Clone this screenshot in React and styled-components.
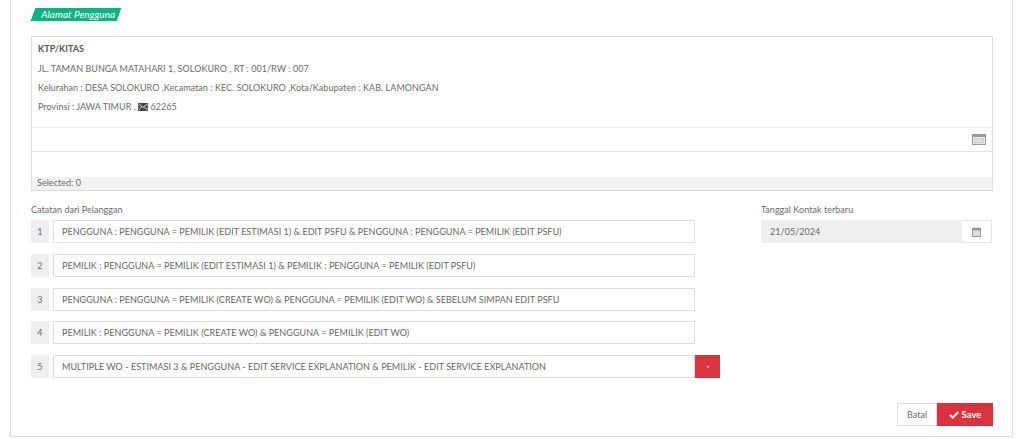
import React from 'react';
import styled, { createGlobalStyle } from 'styled-components';

const notes = [
  'PENGGUNA : PENGGUNA = PEMILIK (EDIT ESTIMASI 1) & EDIT PSFU & PENGGUNA : PENGGUNA = PEMILIK (EDIT PSFU)',
  'PEMILIK : PENGGUNA = PEMILIK (EDIT ESTIMASI 1) & PEMILIK : PENGGUNA = PEMILIK (EDIT PSFU)',
  'PENGGUNA : PENGGUNA = PEMILIK (CREATE WO) & PENGGUNA = PEMILIK (EDIT WO) & SEBELUM SIMPAN EDIT PSFU',
  'PEMILIK : PENGGUNA = PEMILIK (CREATE WO) & PENGGUNA = PEMILIK (EDIT WO)',
  'MULTIPLE WO - ESTIMASI 3 & PENGGUNA - EDIT SERVICE EXPLANATION & PEMILIK - EDIT SERVICE EXPLANATION',
];

const App = () => {
  return (
    <Page>
      <GlobalStyle />
      <Panel>
        <Tag><span>Alamat Pengguna</span></Tag>
        <AddressBox>
          <AddressBody>
            <AddressTitle>KTP/KITAS</AddressTitle>
            <AddressLine>JL. TAMAN BUNGA MATAHARI 1, SOLOKURO , RT : 001/RW : 007</AddressLine>
            <AddressLine>Kelurahan : DESA SOLOKURO ,Kecamatan : KEC. SOLOKURO ,Kota/Kabupaten : KAB. LAMONGAN</AddressLine>
            <AddressLine>
              Provinsi : JAWA TIMUR ,{' '}
              <MailIcon viewBox="0 0 12 10">
                <rect width="12" height="10" fill="#444" />
                <path d="M1 1.5 6 5.5 11 1.5M1 8.5 4.5 4.5M11 8.5 7.5 4.5" stroke="#fff" strokeWidth="1" fill="none" />
              </MailIcon>{' '}
              62265
            </AddressLine>
          </AddressBody>
          <ToolRow>
            <TableIcon viewBox="0 0 14 11">
              <rect x="0.5" y="0.5" width="13" height="10" fill="#eee" stroke="#999" />
              <rect x="1" y="1" width="12" height="2" fill="#999" />
              <rect x="2.5" y="4.5" width="9" height="4.5" fill="#ddd" stroke="#bbb" strokeWidth="0.6" />
            </TableIcon>
          </ToolRow>
          <EmptyRow />
          <SelectedBar>Selected: 0</SelectedBar>
        </AddressBox>
        <FormGrid>
          <NotesColumn>
            <FieldLabel>Catatan dari Pelanggan</FieldLabel>
            <NoteList>
              {notes.map((note, i) => (
                <NoteRow key={note}>
                  <NoteNumber>{i + 1}</NoteNumber>
                  <NoteInput>{note}</NoteInput>
                  {i === notes.length - 1 && <RemoveButton><Caret /></RemoveButton>}
                </NoteRow>
              ))}
            </NoteList>
          </NotesColumn>
          <DateColumn>
            <FieldLabel>Tanggal Kontak terbaru</FieldLabel>
            <DateField>
              <DateValue>21/05/2024</DateValue>
              <DateButton>
                <svg width="9" height="10" viewBox="0 0 9 10">
                  <rect x="0.5" y="1.5" width="8" height="8" fill="#ddd" stroke="#999" />
                  <rect x="0.5" y="1.5" width="8" height="2" fill="#999" />
                  <path d="M2.5 0v2M6.5 0v2" stroke="#999" />
                </svg>
              </DateButton>
            </DateField>
          </DateColumn>
        </FormGrid>
        <Actions>
          <CancelButton>Batal</CancelButton>
          <SaveButton>
            <svg width="10" height="8" viewBox="0 0 10 8">
              <path d="M1 4 3.8 6.6 9 1.2" stroke="#fff" strokeWidth="2" fill="none" />
            </svg>
            Save
          </SaveButton>
        </Actions>
      </Panel>
    </Page>
  );
};

export default App;

const GlobalStyle = createGlobalStyle`
  html, body {
    margin: 0;
    padding: 0;
    background: #fff;
    overflow: hidden;
  }
  * {
    box-sizing: border-box;
  }
`
const Page = styled.div`
  width: 1024px;
  height: 439px;
  padding: 0 11px 2px 10px;
  font-family: Lato, sans-serif;
  font-size: 9px;
  letter-spacing: 0.04px;
  color: #6b6b6b;
  overflow: hidden;
`
const Panel = styled.div`
  height: 437px;
  padding: 8px 19px 0 20px;
  border: 1px solid #ddd;
  border-top: 0;
`
const Tag = styled.div`
  display: flex;
  align-items: center;
  width: 86px;
  height: 13px;
  margin-left: 2px;
  padding: 0 0 1px 8px;
  background: #0db483;
  color: #fff;
  font-size: 10px;
  font-style: italic;
  transform: skewX(-20deg);

  span {
    transform: skewX(20deg);
  }
`
const AddressBox = styled.div`
  width: 962px;
  height: 155px;
  margin-top: 15px;
  border: 1px solid #ddd;
  display: flex;
  flex-direction: column;
`
const AddressBody = styled.div`
  height: 91px;
  padding: 2px 6px 0;
  border-bottom: 1px solid #eee;
`
const AddressTitle = styled.div`
  height: 20px;
  line-height: 19px;
  font-weight: 700;
  color: #555;
`
const AddressLine = styled.div`
  height: 19px;
  line-height: 19px;
`
const MailIcon = styled.svg`
  width: 10px;
  height: 8px;
  vertical-align: -1px;
`
const ToolRow = styled.div`
  height: 24px;
  display: flex;
  justify-content: flex-end;
  align-items: center;
  padding-right: 6px;
  border-bottom: 1px solid #e4e4e4;
`
const TableIcon = styled.svg`
  width: 14px;
  height: 11px;
`
const EmptyRow = styled.div`
  height: 25px;
`
const SelectedBar = styled.div`
  height: 13px;
  line-height: 11px;
  padding-left: 5px;
  background: #f2f2f2;
`
const FormGrid = styled.div`
  display: grid;
  grid-template-columns: 730px 232px;
  margin-top: 14px;
`
const NotesColumn = styled.div`
  display: flex;
  flex-direction: column;
`
const DateColumn = styled.div`
  display: flex;
  flex-direction: column;
`
const FieldLabel = styled.div`
  height: 15px;
  line-height: 10px;
`
const NoteList = styled.div`
  display: flex;
  flex-direction: column;
  gap: 10.75px;
`
const NoteRow = styled.div`
  display: flex;
  height: 23px;
`
const NoteNumber = styled.div`
  width: 18px;
  margin-right: 4px;
  background: #eee;
  display: flex;
  align-items: center;
  justify-content: center;
`
const NoteInput = styled.div`
  width: 642px;
  padding-left: 8px;
  border: 1px solid #ddd;
  line-height: 21px;
  color: #666;
`
const RemoveButton = styled.div`
  width: 25px;
  background: #d9333f;
  display: flex;
  align-items: center;
  justify-content: center;
`
const Caret = styled.span`
  width: 0;
  height: 0;
  border-left: 2px solid transparent;
  border-right: 2px solid transparent;
  border-top: 2px solid #f6c6ca;
`
const DateField = styled.div`
  display: flex;
  height: 23px;
`
const DateValue = styled.div`
  width: 201px;
  padding-left: 9px;
  background: #eee;
  line-height: 23px;
`
const DateButton = styled.div`
  width: 30px;
  border: 1px solid #e6e6e6;
  border-left: 0;
  display: flex;
  align-items: center;
  justify-content: center;
`
const Actions = styled.div`
  display: flex;
  justify-content: flex-end;
  margin-top: 25px;
`
const CancelButton = styled.div`
  width: 40px;
  height: 23px;
  line-height: 21px;
  text-align: center;
  border: 1px solid #ddd;
`
const SaveButton = styled.div`
  width: 56px;
  height: 23px;
  background: #d9333f;
  color: #fff;
  font-weight: 700;
  font-size: 9.5px;
  display: flex;
  align-items: center;
  justify-content: center;
  gap: 3px;
`
